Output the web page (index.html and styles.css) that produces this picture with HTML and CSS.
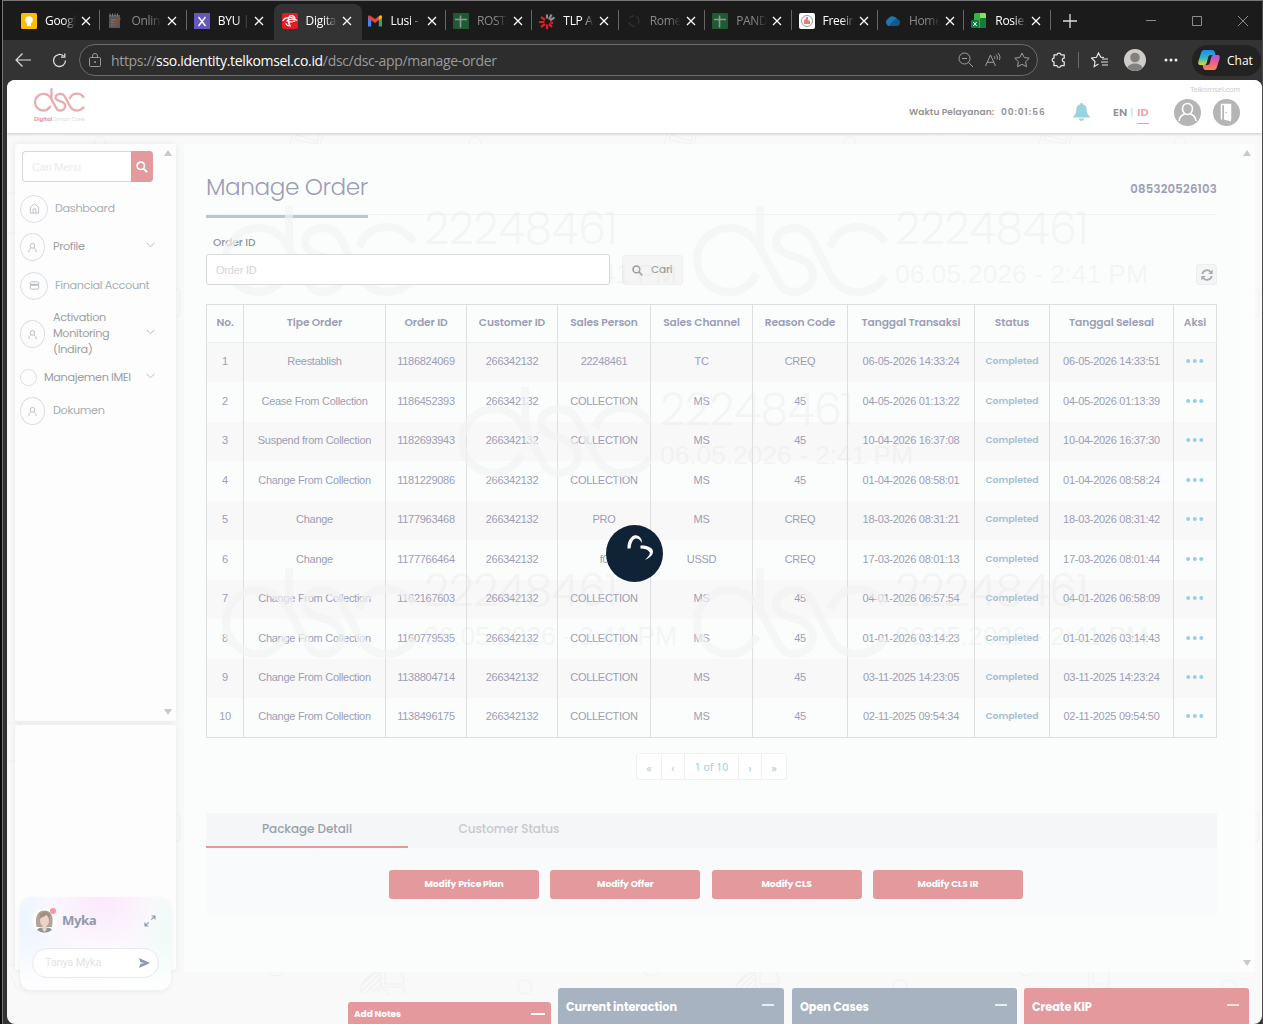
FILE: index.html
```html
<!DOCTYPE html>
<html lang="id">
<head>
    <meta charset="UTF-8">
    <meta name="viewport" content="width=device-width, initial-scale=1.0">
    <title>Digital Smart Care</title>
    <link rel="stylesheet" href="styles.css">
</head>
<body>
    <!-- icons -->
    <svg class="sprite" width="0" height="0">
        <symbol id="x" viewBox="0 0 10 10"><path d="M1 1l8 8M9 1l-8 8" fill="none" stroke="currentColor" stroke-width="1.3"/></symbol>
        <symbol id="sheet" viewBox="0 0 16 16"><rect width="16" height="16" rx="1" fill="#1f5a35"/><path d="M2 6.500h12M7.500 2.500v12" stroke="#8b9a90" stroke-width="1.600"/></symbol>
        <symbol id="dsc" viewBox="0 0 196 91"><path d="M67 0V42L84 73C88 82 93 86 100 86C111 86 120 79 120 69C120 60 113 54 102 51C91 48 83 44 83 36C83 28 91 22 101 22C109 22 115 26 119 33L135 64C141 78 151 86 164 86C176 86 186 80 192 71M192 36C186 27 176 21 165 21C152 21 142 28 137 41M64 68C57 79 48 86 36 86A32 32 0 0 1 36 22C49 22 60 29 67 42" fill="none" stroke="currentColor"/></symbol>
        <symbol id="user" viewBox="0 0 12 12"><path d="M6 1.500a2.400 2.600 0 1 1 0 5.200a2.400 2.600 0 1 1 0-5.200M2 11c0-2.500 1-4 2.600-4.500M10 11c0-2.500-1-4-2.600-4.500" fill="none" stroke="currentColor"/></symbol>
        <symbol id="down" viewBox="0 0 9 6"><path d="M.5.8l4 4 4-4" fill="none" stroke="currentColor"/></symbol>
        <symbol id="glass" viewBox="0 0 12 12"><circle cx="4.800" cy="4.800" r="3.700" fill="none" stroke="currentColor" stroke-width="1.700"/><path d="M7.700 7.700l3.500 3.500" stroke="currentColor" stroke-width="2"/></symbol>
        <symbol id="dots" viewBox="0 0 18 4"><g fill="#98d0df"><circle cx="2.200" cy="2" r="2"/><circle cx="8.800" cy="2" r="2"/><circle cx="15.300" cy="2" r="2"/></g></symbol>
        <symbol id="pie" viewBox="0 0 46 22"><path d="M1 21A22 22 0 0 1 22 0V14l8 8M26 0V12H45M45 12A24 24 0 0 0 42 0M26 15H46L43 22M3 13L15 1M2 20L21 1M7 21L22 6M13 21l9-9M18 21l4-4" fill="none" stroke="#f2f2f2" stroke-width="1.500"/></symbol>
        <symbol id="doc" viewBox="0 0 34 10"><path d="M4 0L1 10M34 0l-3 10M8 0L6 6l22 4 2-10M8 1l20 6" fill="none" stroke="#f1f1f1"/></symbol>
    </svg>

    <div class="browser">
        <div class="tabs">
            <div class="tab"><svg class="fav" viewBox="0 0 16 16"><rect width="16" height="16" rx="1.500" fill="#fbbc04"/><circle cx="8" cy="7" r="3.800" fill="#fff"/><path d="M6 10h4v3H6z" fill="#fff"/></svg><span class="tabName">Google</span><svg class="close"><use href="#x"/></svg></div>
            <div class="tab sleep"><svg class="fav" viewBox="0 0 16 16"><path d="M2 2h11v13H2z" fill="#54585a"/><path d="M3 .5v3M5.500.5v3M8 .5v3M10.500.5v3M4 7h6M4 9.500h4M4 12h5" stroke="#7a7e80"/><path d="M6 12l7-7" stroke="#8a4f2c" stroke-width="2.500"/></svg><span class="tabName">Online</span><svg class="close"><use href="#x"/></svg></div>
            <div class="tab"><svg class="fav" viewBox="0 0 16 16"><rect width="16" height="16" fill="#6259b8"/><path d="M4.500 4l7 9M11.500 4l-7 9" stroke="#fff" stroke-width="1.400"/></svg><span class="tabName">BYU | C</span><svg class="close"><use href="#x"/></svg></div>
            <div class="tab active"><svg class="fav" viewBox="0 0 16 16"><rect width="16" height="16" rx="2" fill="#e31b23"/><path d="M1 8c1-4 10-5 13-1-3-1-8-1-9 1 2 1 6 1 8 0M8 2.500C5.500 5 6 10 8.500 13.500M4 10c0 2 2 3 4 2.500M8 3c2-1 4 0 5 2" fill="none" stroke="#fff" stroke-width="1.300"/></svg><span class="tabName">Digital</span><svg class="close"><use href="#x"/></svg></div>
            <div class="tab"><svg class="fav" viewBox="0 0 16 16"><path d="M1 13.500V4l3.200 2.400v7.100z" fill="#4285f4"/><path d="M15 13.500V4l-3.200 2.400v7.100z" fill="#34a853"/><path d="M1 3.800C1 2.500 2.600 2 3.700 2.900L8 6.100V10L1 4.900z" fill="#ea4335"/><path d="M15 3.800c0-1.300-1.600-1.800-2.700-.9L8 6.100V10l7-5.100z" fill="#ea4335"/><path d="M15 3.800c0-1.300-1.600-1.800-2.700-.9l-.5.400v4L15 4.900z" fill="#fbbc04"/></svg><span class="tabName">Lusi - M</span><svg class="close"><use href="#x"/></svg></div>
            <div class="tab sleep"><svg class="fav"><use href="#sheet"/></svg><span class="tabName">ROSTE</span><svg class="close"><use href="#x"/></svg></div>
            <div class="tab"><svg class="fav" viewBox="0 0 16 16"><g fill="none" stroke-width="2.200"><path d="M6 7L2 4M5.500 9H0M6 11l-4 3M8 11.500V16M10 11l3 3M11 9.500l3 .5" stroke="#e31b23"/><path d="M8 5.500V1.500M10 6.500l2.500-5M11 7.500l4.500-3" stroke="#8c8c8c"/></g></svg><span class="tabName">TLP Ap</span><svg class="close"><use href="#x"/></svg></div>
            <div class="tab sleep"><svg class="fav" viewBox="0 0 16 16"><path d="M3.500 5A5 5 0 0 1 8 3M10 3.500a5 5 0 0 1 2 7.500M9 13a5 5 0 0 1-6-4" fill="none" stroke="#303030" stroke-width="1.500"/></svg><span class="tabName">Romeo</span><svg class="close"><use href="#x"/></svg></div>
            <div class="tab sleep"><svg class="fav"><use href="#sheet"/></svg><span class="tabName">PANDU</span><svg class="close"><use href="#x"/></svg></div>
            <div class="tab"><svg class="fav" viewBox="0 0 16 16"><rect width="16" height="16" rx="2" fill="#fff"/><circle cx="8" cy="8" r="5.500" fill="none" stroke="#999"/><path d="M5 10V7l2-1V4h2v3l2 1v3H5z" fill="#ea7d74"/></svg><span class="tabName">Freein</span><svg class="close"><use href="#x"/></svg></div>
            <div class="tab sleep"><svg class="fav" viewBox="0 0 16 16"><path d="M4 13a4 4 0 0 1-.5-7.500A5 5 0 0 1 12 6a3.600 3.600 0 0 1 .5 7z" fill="#14568f"/><path d="M3.500 5.500A5 5 0 0 1 12 6c-3 0-5 3-8 7A4 4 0 0 1 3.500 5.500z" fill="#1c78b5"/></svg><span class="tabName">Home</span><svg class="close"><use href="#x"/></svg></div>
            <div class="tab"><svg class="fav" viewBox="0 0 16 16"><rect x="3" y="0" width="12" height="15" rx="1.500" fill="#36b14a"/><path d="M3 5h6V0h4.500A1.500 1.500 0 0 1 15 1.500V5z" fill="#8fe04d"/><path d="M9 5h6v10H9z" fill="#187a3a"/><rect y="7" width="8" height="8" rx="1" fill="#107c41"/><path d="M2.300 9l3.400 4M5.700 9l-3.400 4" stroke="#fff"/></svg><span class="tabName">Rosie.x</span><svg class="close"><use href="#x"/></svg></div>
            <svg class="plus" viewBox="0 0 14 14"><path d="M7 0v14M0 7h14" stroke="#ddd" stroke-width="1.300"/></svg>
            <div class="winButtons">
                <svg viewBox="0 0 10 10"><path d="M0 4.500h10" stroke="#8c8c8c"/></svg>
                <svg viewBox="0 0 10 10"><path d="M.5.500h9v9h-9z" fill="none" stroke="#8c8c8c"/></svg>
                <svg viewBox="0 0 10 10"><path d="M0 0l10 10M10 0L0 10" stroke="#8c8c8c"/></svg>
            </div>
        </div>

        <div class="toolbar">
            <svg class="back" viewBox="0 0 16 14"><path d="M16 7H1M7.500.5L1 7l6.500 6.500" fill="none" stroke="#ddd" stroke-width="1.200"/></svg>
            <svg class="reload" viewBox="0 0 15 15"><path d="M13.500 7.500a6 6 0 1 1-2-4.500M12.800.5v3.700H9" fill="none" stroke="#ddd" stroke-width="1.300"/></svg>
            <div class="address">
                <svg class="lock" viewBox="0 0 12 14"><path d="M.5 5.500a1 1 0 0 1 1-1h9a1 1 0 0 1 1 1v7a1 1 0 0 1-1 1h-9a1 1 0 0 1-1-1zM3.500 4.500V3a2.500 2.500 0 0 1 5 0v1.500" fill="none" stroke="#9a9a9a"/><circle cx="6" cy="9" r="1" fill="#9a9a9a"/></svg>
                <span class="url">https://<b>sso.identity.telkomsel.co.id</b>/dsc/dsc-app/manage-order</span>
                <svg class="zoomOut" viewBox="0 0 16 16"><path d="M6.500 1a5.500 5.500 0 1 1 0 11a5.500 5.500 0 1 1 0-11M4 6.500h5M10.500 10.500l4.500 4.500" fill="none" stroke="#a0a0a0"/></svg>
                <svg class="read" viewBox="0 0 16 16"><path d="M.5 14L5.500 3l5 11M2.300 10.300h6.400M9 4c1 1 1 2 .5 3M11 2.500c1.500 1.500 1.700 3.300 1 5M13 1c2 2 2.500 5 1.300 7" fill="none" stroke="#a0a0a0"/></svg>
                <svg class="star" viewBox="0 0 16 16"><path d="M8 1l2.200 4.500 5 .7-3.600 3.500.9 5L8 12.300 3.500 14.700l.9-5L.8 6.200l5-.7z" fill="none" stroke="#a0a0a0"/></svg>
            </div>
            <svg class="ext" viewBox="0 0 16 16"><path d="M3 2.800h3c.2-2.200 3.800-2.200 4 0h3.200v3.400c-2.600.2-2.600 3.600 0 3.800v3.700H10c-.2 2.100-3.800 2.100-4 0H3V10C.6 9.800.6 6.400 3 6.200z" fill="none" stroke="#e4e4e4" stroke-width="1.300" stroke-linejoin="round"/></svg>
            <i class="bar"></i>
            <svg class="favs" viewBox="0 0 18 16"><path d="M13 5.500l-3.200-.3L7.500 1 5.500 5.300l-5 .8L4 9.500l-.8 5L7.500 12M11 7h6M10 10h7M11 13h6" fill="none" stroke="#e4e4e4" stroke-width="1.200"/></svg>
            <svg class="avatar" viewBox="0 0 22 22"><circle cx="11" cy="11" r="11" fill="#cfcdca"/><circle cx="11" cy="8.500" r="4.800" fill="#83807d"/><path d="M3.500 19c1-6 14-6 15 0a11 11 0 0 1-15 0z" fill="#83807d"/></svg>
            <svg class="more" viewBox="0 0 14 4"><g fill="#eee"><circle cx="2" cy="2" r="1.500"/><circle cx="7" cy="2" r="1.500"/><circle cx="12" cy="2" r="1.500"/></g></svg>
            <div class="chat">
                <svg viewBox="0 0 22 20">
                    <defs>
                        <linearGradient id="cl" x1="0" y1="0" x2="0" y2="1"><stop offset="0" stop-color="#1f8af0"/><stop offset=".5" stop-color="#2bb6c9"/><stop offset="1" stop-color="#e0d53d"/></linearGradient>
                        <linearGradient id="cr" x1="0" y1="0" x2="0" y2="1"><stop offset="0" stop-color="#a05be8"/><stop offset=".5" stop-color="#ee5a8f"/><stop offset="1" stop-color="#ff8a4a"/></linearGradient>
                    </defs>
                    <path d="M6 0h8c2 0 2.500 1 3 3l.5 2H13c-2 0-2.500 1-3 3l-1 4c-.7 2.500-1.500 3-3 3H2.500C0 15 0 13 .5 11L3 3C3.500 1 4.500 0 6 0z" fill="url(#cl)"/>
                    <path d="M16 20H8c-2 0-2.500-1-3-3l-.4-2H9c2 0 2.500-1 3-3l1-4c.7-2.500 1.500-3 3-3h3.500C22 5 22 7 21.500 9L19 17c-.5 2-1.500 3-3 3z" fill="url(#cr)"/>
                </svg>
                <span>Chat</span>
            </div>
        </div>

        <div class="page">
            <div class="header">
                <div class="logo">
                    <svg><use href="#dsc"/></svg>
                    <p><b>Digital</b> Smart Care</p>
                </div>
                <span class="site">Telkomsel.com</span>
                <span class="serve">Waktu Pelayanan:</span>
                <span class="clock">00:01:56</span>
                <svg class="bell" viewBox="0 0 17 18"><path d="M8.500 0c1 0 1.300.6 1.300 1.300C12.500 2 13.700 4 13.700 7c0 3 1 4.500 3 6.500v1H.3v-1c2-2 3-3.500 3-6.500 0-3 1.200-5 3.900-5.700C7.200.6 7.500 0 8.500 0zM6 15.500h5c0 1.500-1 2.500-2.500 2.500S6 17 6 15.500z" fill="#9bd2e0"/></svg>
                <span class="lang">EN<i>|</i><b>ID</b></span>
                <svg class="round" viewBox="0 0 27 27"><circle cx="13.500" cy="13.500" r="13.500" fill="#b5b5b5"/><path d="M13.500 4.500c3 0 5 2.500 5 5.300s-2 5.700-5 5.700-5-2.900-5-5.700 2-5.300 5-5.300zM5 22c.5-4 2.500-6 5.500-7M22 22c-.5-4-2.500-6-5.500-7" fill="none" stroke="#fff" stroke-width="1.600"/></svg>
                <svg class="round" viewBox="0 0 27 27"><circle cx="13.500" cy="13.500" r="13.500" fill="#b5b5b5"/><path d="M8.500 20.500v-15h9v15" fill="none" stroke="#fff" stroke-width="1.500"/><path d="M11 5.500l7-.5v17.500l-7-2z" fill="#fff"/><circle cx="13" cy="13.500" r=".8" fill="#b5b5b5"/></svg>
            </div>

            <svg class="doodle" viewBox="0 0 1255 891">
                <g fill="none" stroke="#f1f1f1"><circle cx="93" cy="10" r="6"/><circle cx="468" cy="10" r="6"/><circle cx="843" cy="10" r="6"/><circle cx="1173" cy="10" r="6"/><circle cx="269" cy="835" r="8"/><circle cx="518" cy="854" r="7"/><circle cx="644" cy="835" r="8"/><circle cx="893" cy="854" r="7"/><circle cx="1019" cy="835" r="8"/><circle cx="1222" cy="854" r="7"/><rect x="160" y="156" width="13" height="27" rx="2"/><rect x="160" y="681" width="13" height="27" rx="2"/><rect x="1240" y="156" width="12" height="27" rx="2"/><rect x="1240" y="681" width="12" height="27" rx="2"/><path d="M0 60h14v40H0M0 590h14v38H0M1 832h12v25l8 1M3 840l8 18"/></g>
                <use href="#doc" x="282" y="1" width="34" height="10"/><use href="#doc" x="656" y="1" width="34" height="10"/><use href="#doc" x="1031" y="1" width="34" height="10"/>
                <use href="#pie" x="352" y="839" width="46" height="22"/><use href="#pie" x="727" y="839" width="46" height="22"/><path d="M1082 839v20h20v-20M1086 839v12h16" fill="none" stroke="#f1f1f1"/>
            </svg>

            <div class="layout">
                <div class="side">
                    <div class="menu">
                        <div class="items">
                            <div class="searchMenu"><span>Cari Menu</span><button><svg><use href="#glass"/></svg></button></div>
                            <div class="item"><i class="circle big"><svg viewBox="0 0 12 12"><path d="M1.500 11V4.500L6 1l4.500 3.500V11zM4.500 11V6.500h3V11" fill="none" stroke="currentColor" stroke-width=".9"/></svg></i><span>Dashboard</span></div>
                            <div class="item dark"><i class="circle"><svg><use href="#user"/></svg></i><span>Profile</span><svg class="down"><use href="#down"/></svg></div>
                            <div class="item"><i class="circle big"><svg viewBox="0 0 12 12"><rect x="1.500" y="2" width="9" height="8" rx="1" fill="none" stroke="currentColor"/><path d="M2 5.200h8" stroke="currentColor" stroke-width="2"/></svg></i><span>Financial Account</span></div>
                            <div class="item dark tall"><i class="circle"><svg><use href="#user"/></svg></i><span>Activation<br>Monitoring<br>(Indira)</span><svg class="down"><use href="#down"/></svg></div>
                            <div class="item dark low"><i class="circle small"></i><span>Manajemen IMEI</span><svg class="down"><use href="#down"/></svg></div>
                            <div class="item"><i class="circle"><svg><use href="#user"/></svg></i><span>Dokumen</span></div>
                        </div>
                        <div class="scroll"><i class="arrowUp"></i><i class="arrowDown"></i></div>
                    </div>
                    <div class="box"></div>
                    <div class="myka">
                        <div class="mykaTop">
                            <svg class="face" viewBox="0 0 25 25"><circle cx="12.500" cy="13" r="12" fill="#fff"/><path d="M4.500 19C2.500 8 6 2.500 12.500 2.500S22 8 20 19z" fill="#b3a297"/><path d="M5 22c2-3 5-2 7.500-2s5.500-1 7.500 2a12 12 0 0 1-15 0z" fill="#8f9398"/><ellipse cx="12.500" cy="12.500" rx="4.500" ry="6" fill="#ecd3c8"/><path d="M10.500 18h4v4l-2 2-2-2z" fill="#ecd3c8"/><path d="M7.500 12c1-4 6-2 7-6 1 3 3 3 3 6l1-6-5-3-6 3z" fill="#a39083"/><circle cx="21" cy="3" r="3" fill="#ff94a0"/></svg>
                            <b>Myka</b>
                            <svg class="expand" viewBox="0 0 12 12"><path d="M7.500 1H11v3.500M11 1L7.300 4.700M4.500 11H1V7.500M1 11l3.700-3.700" fill="none" stroke="#8e9aae" stroke-width="1.200"/></svg>
                        </div>
                        <div class="ask"><span>Tanya Myka</span><svg viewBox="0 0 11 10"><path d="M0 0l11 5L0 10l1.500-4.200L6 5 1.500 4.200z" fill="#8b97ae"/></svg></div>
                    </div>
                </div>

                <div class="main">
                    <div class="content">
                        <div class="titleRow"><h1>Manage Order</h1><span>085320526103</span></div>
                        <label class="label">Order ID</label>
                        <div class="findRow">
                            <div class="orderInput">Order ID</div>
                            <button class="find"><svg><use href="#glass"/></svg>Cari</button>
                            <button class="refresh"><svg viewBox="0 0 12 12"><path d="M1.300 5A4.800 4.800 0 0 1 9.800 3M10.700 7A4.800 4.800 0 0 1 2.200 9" fill="none" stroke="currentColor" stroke-width="1.800"/><path d="M11.700.5V5H7.200zM.3 11.500V7h4.500z" fill="currentColor"/></svg></button>
                        </div>
                        <table class="orders">
                            <colgroup><col class="c1"><col class="c2"><col class="c3"><col class="c4"><col class="c5"><col class="c6"><col class="c7"><col class="c8"><col class="c9"><col class="c10"><col class="c11"></colgroup>
                            <thead>
                                <tr><th>No.</th><th>Tipe Order</th><th>Order ID</th><th>Customer ID</th><th>Sales Person</th><th>Sales Channel</th><th>Reason Code</th><th>Tanggal Transaksi</th><th>Status</th><th>Tanggal Selesai</th><th>Aksi</th></tr>
                            </thead>
                            <tbody>
                                <tr><td>1</td><td>Reestablish</td><td>1186824069</td><td>266342132</td><td>22248461</td><td>TC</td><td>CREQ</td><td>06-05-2026 14:33:24</td><td class="done">Completed</td><td>06-05-2026 14:33:51</td><td><svg><use href="#dots"/></svg></td></tr>
                                <tr><td>2</td><td>Cease From Collection</td><td>1186452393</td><td>266342132</td><td>COLLECTION</td><td>MS</td><td>45</td><td>04-05-2026 01:13:22</td><td class="done">Completed</td><td>04-05-2026 01:13:39</td><td><svg><use href="#dots"/></svg></td></tr>
                                <tr><td>3</td><td>Suspend from Collection</td><td>1182693943</td><td>266342132</td><td>COLLECTION</td><td>MS</td><td>45</td><td>10-04-2026 16:37:08</td><td class="done">Completed</td><td>10-04-2026 16:37:30</td><td><svg><use href="#dots"/></svg></td></tr>
                                <tr><td>4</td><td>Change From Collection</td><td>1181229086</td><td>266342132</td><td>COLLECTION</td><td>MS</td><td>45</td><td>01-04-2026 08:58:01</td><td class="done">Completed</td><td>01-04-2026 08:58:24</td><td><svg><use href="#dots"/></svg></td></tr>
                                <tr><td>5</td><td>Change</td><td>1177963468</td><td>266342132</td><td>PRO</td><td>MS</td><td>CREQ</td><td>18-03-2026 08:31:21</td><td class="done">Completed</td><td>18-03-2026 08:31:42</td><td><svg><use href="#dots"/></svg></td></tr>
                                <tr><td>6</td><td>Change</td><td>1177766464</td><td>266342132</td><td>f0</td><td>USSD</td><td>CREQ</td><td>17-03-2026 08:01:13</td><td class="done">Completed</td><td>17-03-2026 08:01:44</td><td><svg><use href="#dots"/></svg></td></tr>
                                <tr><td>7</td><td>Change From Collection</td><td>1162167603</td><td>266342132</td><td>COLLECTION</td><td>MS</td><td>45</td><td>04-01-2026 06:57:54</td><td class="done">Completed</td><td>04-01-2026 06:58:09</td><td><svg><use href="#dots"/></svg></td></tr>
                                <tr><td>8</td><td>Change From Collection</td><td>1160779535</td><td>266342132</td><td>COLLECTION</td><td>MS</td><td>45</td><td>01-01-2026 03:14:23</td><td class="done">Completed</td><td>01-01-2026 03:14:43</td><td><svg><use href="#dots"/></svg></td></tr>
                                <tr><td>9</td><td>Change From Collection</td><td>1138804714</td><td>266342132</td><td>COLLECTION</td><td>MS</td><td>45</td><td>03-11-2025 14:23:05</td><td class="done">Completed</td><td>03-11-2025 14:23:24</td><td><svg><use href="#dots"/></svg></td></tr>
                                <tr><td>10</td><td>Change From Collection</td><td>1138496175</td><td>266342132</td><td>COLLECTION</td><td>MS</td><td>45</td><td>02-11-2025 09:54:34</td><td class="done">Completed</td><td>02-11-2025 09:54:50</td><td><svg><use href="#dots"/></svg></td></tr>
                            </tbody>
                        </table>
                        <div class="pager"><span class="off">«</span><span class="off">‹</span><span class="now">1 of 10</span><span>›</span><span>»</span></div>
                        <div class="detail">
                            <div class="detailTabs"><span class="sel">Package Detail</span><span>Customer Status</span></div>
                            <div class="actions"><button>Modify Price Plan</button><button>Modify Offer</button><button>Modify CLS</button><button>Modify CLS IR</button></div>
                        </div>
                    </div>
                    <div class="scroll"><i class="arrowUp"></i><i class="arrowDown"></i></div>
                    <!-- watermark over the content -->
                    <div class="mark m1"><svg><use href="#dsc"/></svg><p>22248461</p><small>06.05.2026 - 2:41 PM</small></div>
                    <div class="mark m2"><svg><use href="#dsc"/></svg><p>22248461</p><small>06.05.2026 - 2:41 PM</small></div>
                    <div class="mark m3"><svg><use href="#dsc"/></svg><p>22248461</p><small>06.05.2026 - 2:41 PM</small></div>
                    <div class="mark m4"><svg><use href="#dsc"/></svg><p>22248461</p><small>06.05.2026 - 2:41 PM</small></div>
                    <div class="mark m5"><svg><use href="#dsc"/></svg><p>22248461</p><small>06.05.2026 - 2:41 PM</small></div>
                </div>
            </div>

            <div class="dock">
                <div class="card notes"><span>Add Notes</span><i></i></div>
                <div class="card blue wide"><span>Current interaction</span><i></i></div>
                <div class="card blue"><span>Open Cases</span><i></i></div>
                <div class="card"><span>Create KIP</span><i></i></div>
            </div>

            <svg class="loader" viewBox="0 0 57 57"><circle cx="28.500" cy="28.500" r="28.500" fill="#102235"/><path d="M21.500 23.500C21 16 26 9 31 10.500c3.500 1 5 4 5 7.500-2-4-4.500-5-6.500-4.500-3 1-4 4-5 10z" fill="#fff"/><path d="M34.500 20.500c6-.5 12.500 2 12.500 6 0 4-4 6.500-8 8.500 4-4 5.500-6 4.500-8-1.500-2.500-5-3.500-9-3.500z" fill="#fff"/></svg>
        </div>
    </div>
</body>
</html>
```

FILE: styles.css
```css
*{
    box-sizing: border-box;
}
body{
    margin: 0;
    width: 1263px;
    height: 1024px;
    overflow: hidden;
    background: #0c0c0c;
    font-family: Poppins, Inter, "Noto Sans", sans-serif;
    color: #9d9db6;
}
p,h1{
    margin: 0;
}
button{
    font-family: inherit;
    border: 0;
    padding: 0;
}
svg{
    display: block;
    flex: none;
}
.sprite{
    position: absolute;
}
/* browser frame */
.browser{
    height: 1024px;
    margin-left: 2px;
    display: flex;
    flex-direction: column;
    background: #333;
    border-top: 1px solid #777;
    border-left: 1px solid #777;
    border-right: 1px solid #4b4b4b;
}
.tabs{
    height: 39px;
    flex: none;
    padding-left: 10px;
    display: flex;
    align-items: center;
    background: #1b1b1b;
    font: 12px "Open Sans", sans-serif;
    letter-spacing: -0.3px;
    color: #fff;
}
.tab{
    width: 86.4px;
    height: 39px;
    padding-left: 8px;
    flex: none;
    display: flex;
    align-items: center;
    position: relative;
}
.tab::after{
    content: "";
    position: absolute;
    right: -1px;
    top: 9px;
    height: 20px;
    width: 1px;
    background: #666;
}
.active::after,.tab:nth-child(3)::after{
    display: none;
}
.fav{
    width: 16px;
    height: 16px;
}
.tabName{
    width: 31px;
    margin: 0 5px 0 8px;
    overflow: hidden;
    white-space: nowrap;
    -webkit-mask-image: linear-gradient(90deg, #000 60%, transparent);
    mask-image: linear-gradient(90deg, #000 60%, transparent);
}
.close{
    width: 10px;
    height: 10px;
}
.sleep .tabName{
    color: #8a8a8a;
}
.active{
    width: 88px;
    height: 36px;
    margin: 3px -3px 0 1.4px;
    padding-bottom: 3px;
    background: #333;
    border-radius: 8px 8px 0 0;
}
.plus{
    width: 14px;
    height: 14px;
    margin-left: 13px;
}
.winButtons{
    margin-left: auto;
    margin-right: 14px;
    display: flex;
    gap: 36px;
}
.winButtons svg{
    width: 10px;
    height: 10px;
}
.toolbar{
    height: 40px;
    flex: none;
    display: flex;
    align-items: center;
    padding-left: 12px;
}
.back{
    width: 16px;
    height: 14px;
}
.reload{
    width: 15px;
    height: 15px;
    margin: 0 13px 0 21px;
}
.address{
    width: 959px;
    height: 32px;
    margin-left: -1px;
    padding: 0 7px 0 9px;
    display: flex;
    align-items: center;
    border: 1px solid #6b6b6b;
    border-radius: 16px;
    background: #2d2d2d;
}
.lock{
    width: 12px;
    height: 14px;
}
.url{
    flex: 1;
    margin-left: 10px;
    font: 14px "Open Sans", sans-serif;
    letter-spacing: -0.33px;
    color: #9b9b9b;
}
.url b{
    font-weight: normal;
    color: #fff;
}
.zoomOut,.read,.star{
    width: 16px;
    height: 16px;
}
.zoomOut{
    margin-right: -2px;
}
.read,.star{
    margin-left: 13px;
}
.ext{
    width: 16px;
    height: 16px;
    margin-left: 13px;
}
.bar{
    width: 1px;
    height: 16px;
    margin: 0 12px 0 11px;
    background: #6b6b6b;
}
.favs{
    width: 18px;
    height: 16px;
}
.avatar{
    width: 22px;
    height: 22px;
    margin: 0 18px 0 15px;
}
.more{
    width: 14px;
    height: 4px;
}
.chat{
    width: 69px;
    height: 31px;
    margin-left: 14px;
    padding-left: 6px;
    display: flex;
    align-items: center;
    gap: 7px;
    border-radius: 16px;
    background: #222;
    color: #fff;
    font: 12px "Open Sans", sans-serif;
}
.chat svg{
    width: 22px;
    height: 20px;
}
/* page */
.page{
    flex: 1;
    margin-left: 4px;
    display: flex;
    flex-direction: column;
    position: relative;
    overflow: hidden;
    border-radius: 8px;
    background: #f9f9f9;
}
.header{
    height: 53px;
    flex: none;
    padding: 11px 22px 0 27px;
    display: flex;
    align-items: center;
    position: relative;
    z-index: 1;
    background: #fff;
    box-shadow: 0 1px 3px rgba(0,0,0,.2);
}
.logo{
    margin: -14px auto 0 0;
    color: #ebacb1;
}
.logo svg{
    width: 51px;
    height: 24px;
    stroke-width: 9;
}
.logo p{
    margin-top: 3px;
    font-size: 5.6px;
    line-height: 8px;
    letter-spacing: -0.1px;
    color: #ddd;
}
.logo b{
    color: #e9a4aa;
}
.site{
    position: absolute;
    top: 5px;
    right: 22px;
    font: 8px/10px "Liberation Sans", sans-serif;
    letter-spacing: -0.2px;
    color: #c9ced6;
}
.serve,.clock{
    font-size: 9px;
    font-weight: 600;
    color: #929292;
    white-space: nowrap;
}
.serve{
    width: 86px;
    letter-spacing: 0.1px;
}
.clock{
    width: 45px;
    margin-left: 6px;
    letter-spacing: 0.95px;
}
.bell{
    width: 17px;
    height: 18px;
    margin-left: 27px;
}
.lang{
    width: 61px;
    margin-left: 23px;
    font-size: 11.3px;
    font-weight: 600;
    color: #929292;
    white-space: nowrap;
}
.lang i{
    margin: 0 4px 0 3px;
    font-style: normal;
    font-weight: 300;
    color: #ccc;
}
.lang b{
    padding-bottom: 3px;
    font-weight: 600;
    color: #f29aa2;
    border-bottom: 1px solid #f29aa2;
}
.round{
    width: 27px;
    height: 27px;
}
.round + .round{
    margin-left: 12px;
}
.doodle{
    position: absolute;
    top: 53px;
    left: 0;
    width: 1255px;
    height: 891px;
}
.layout{
    height: 839px;
    flex: none;
    padding: 11px 7px 0 8px;
    display: flex;
    gap: 8px;
    position: relative;
}
.side{
    width: 161px;
    flex: none;
    display: flex;
    flex-direction: column;
    gap: 4px;
    position: relative;
}
.menu{
    height: 577px;
    display: flex;
    background: #fdfdfd;
    border-radius: 3px;
    box-shadow: 0 0 6px rgba(0,0,0,.08);
}
.box{
    height: 245px;
    background: #fdfdfd;
    border-radius: 3px;
    box-shadow: 0 0 6px rgba(0,0,0,.08);
}
.items{
    width: 146px;
    padding: 7px 6px 7px 5px;
}
.scroll{
    width: 15px;
    flex: none;
    padding: 6px 0;
    display: flex;
    flex-direction: column;
    align-items: center;
    justify-content: space-between;
    background: #fdfdfd;
}
.arrowUp,.arrowDown{
    margin-right: 1px;
    border: 4.5px solid transparent;
    border-bottom: 6px solid #c9c9c9;
    border-top: 0;
}
.arrowDown{
    border-top: 6px solid #c9c9c9;
    border-bottom: 0;
}
.searchMenu{
    width: 131px;
    height: 31px;
    margin: 0 0 12.5px 2px;
    padding-left: 9px;
    display: flex;
    align-items: center;
    justify-content: space-between;
    border: 1px solid #d3d8dc;
    border-right: 0;
    border-radius: 4px;
    background: #fff;
    font: 11px "Liberation Sans", sans-serif;
    letter-spacing: -0.2px;
    color: #ebebeb;
}
.searchMenu button{
    width: 22px;
    height: 31px;
    padding-left: 5px;
    border-radius: 0 4px 4px 0;
    background: #e4999d;
    color: #fff;
}
.searchMenu button svg{
    width: 12px;
    height: 12px;
}
.item{
    height: 28px;
    margin-bottom: 10.5px;
    display: flex;
    align-items: center;
    font-size: 11.3px;
    line-height: 16px;
    letter-spacing: -0.38px;
    white-space: nowrap;
    color: #a8aeb6;
}
.item span{
    margin-top: -2px;
}
.dark{
    color: #9c9ea2;
}
.tall{
    height: 48px;
    margin-bottom: 11px;
}
.low{
    height: 17px;
    margin-bottom: 11px;
}
.circle{
    width: 25px;
    height: 28px;
    margin-right: 8px;
    flex: none;
    display: flex;
    align-items: center;
    justify-content: center;
    border: 1px solid #dcdfe2;
    border-radius: 50%;
    color: #b4bac1;
}
.circle svg{
    width: 11px;
    height: 11px;
}
.big{
    width: 28px;
    margin-right: 7px;
}
.small{
    width: 17px;
    height: 17px;
    margin-right: 7px;
}
.down{
    width: 9px;
    height: 6px;
    margin: 0 0 4px auto;
    color: #bbb;
}
.myka{
    position: absolute;
    left: 5px;
    top: 753px;
    width: 151px;
    height: 93px;
    padding: 11px 12px;
    border-radius: 12px;
    background: radial-gradient(circle at 55% 0, #fbe8fc 0, rgba(255,246,253,.6) 40%, transparent 65%), linear-gradient(180deg, transparent 40%, #fff), linear-gradient(90deg, #eff5ff, #f9f9ff 55%, #edfbf6);
    box-shadow: 0 2px 6px rgba(0,0,0,.05);
}
.mykaTop{
    display: flex;
    align-items: center;
    font: 13.2px/25px "Noto Sans", sans-serif;
    letter-spacing: -0.5px;
    color: #8e9aae;
}
.mykaTop b{
    margin-left: 5px;
}
.face{
    width: 25px;
    height: 25px;
}
.expand{
    width: 12px;
    height: 12px;
    margin: 1px 3px 0 auto;
}
.ask{
    width: 127px;
    height: 30px;
    margin-top: 15px;
    padding: 0 8px 0 12px;
    display: flex;
    align-items: center;
    justify-content: space-between;
    border: 1px solid #e8e9ee;
    border-radius: 15px;
    background: #fff;
    font: 11px/26px Roboto, sans-serif;
    letter-spacing: -0.2px;
    color: #e2e4e7;
}
.ask svg{
    width: 11px;
    height: 10px;
}
.main{
    flex: 1;
    display: flex;
    position: relative;
    overflow: hidden;
    background: #fbfdfc;
}
.content{
    flex: 1;
    padding: 0 23px 0 22px;
}
.titleRow{
    height: 71px;
    padding-top: 17px;
    display: flex;
    justify-content: space-between;
    border-bottom: 1px solid #f1f3f3;
}
.titleRow h1{
    width: 162px;
    height: 57px;
    font-size: 23.2px;
    font-weight: 300;
    line-height: 52px;
    letter-spacing: -0.45px;
    white-space: nowrap;
    border-bottom: 3px solid #b3c8d8;
}
.titleRow span{
    font-size: 11.7px;
    font-weight: 600;
    line-height: 56px;
    letter-spacing: 0.2px;
}
.label{
    display: block;
    margin: 20px 0 4px 7px;
    font-size: 10.6px;
    font-weight: 500;
    line-height: 15px;
    letter-spacing: -0.1px;
    color: #8f959c;
}
.findRow{
    display: flex;
    align-items: flex-end;
}
.orderInput{
    width: 404px;
    height: 31px;
    padding-left: 9px;
    position: relative;
    z-index: 2;
    border: 1px solid #d6d9da;
    border-radius: 3px;
    background: #fff;
    font: 11px/31px "Liberation Sans", sans-serif;
    letter-spacing: -0.2px;
    color: #d5d5d5;
}
.find{
    width: 61px;
    height: 30px;
    margin-left: 12px;
    padding-left: 9px;
    display: flex;
    align-items: center;
    gap: 8px;
    border: 1px solid #efefef;
    border-radius: 3px;
    background: #f5f5f5;
    font-size: 10.6px;
    font-weight: 500;
    letter-spacing: -0.2px;
    color: #9a9a9a;
}
.find svg{
    width: 11px;
    height: 11px;
}
.refresh{
    width: 21px;
    height: 21px;
    margin-left: auto;
    display: flex;
    align-items: center;
    justify-content: center;
    border: 1px solid #ededed;
    border-radius: 3px;
    background: #f5f5f5;
    color: #a6adb2;
}
.refresh svg{
    width: 12px;
    height: 12px;
}
.orders{
    width: 1011px;
    height: 434px;
    margin-top: 19px;
    table-layout: fixed;
    border-collapse: collapse;
    border: 1px solid #dcdedf;
}
.c1{width: 37px;}
.c2{width: 142px;}
.c3{width: 81px;}
.c4{width: 91px;}
.c5{width: 93px;}
.c6{width: 102px;}
.c7{width: 95px;}
.c8{width: 127px;}
.c9{width: 75px;}
.c10{width: 124px;}
.c11{width: 43px;}
.orders th,.orders td{
    padding: 0;
    text-align: center;
    white-space: nowrap;
    border-left: 1px solid #dcdedf;
}
.orders th{
    height: 38px;
    padding-bottom: 2px;
    font-size: 10.7px;
    font-weight: 600;
    letter-spacing: -0.1px;
    border-bottom: 1px solid #eceeee;
}
.orders td{
    height: 39.5px;
    padding-bottom: 2.5px;
    font: 11px "Liberation Sans", sans-serif;
    letter-spacing: -0.28px;
}
.orders tbody tr:nth-child(odd){
    background: #f8f8f8;
}
.orders .done{
    font: 600 9.3px Poppins, Inter, sans-serif;
    letter-spacing: 0;
    color: #a5bfd2;
}
.orders td svg{
    width: 18px;
    height: 4px;
    margin: 0 auto;
}
.pager{
    width: 151px;
    height: 27px;
    margin: 15px 0 33px 430px;
    display: flex;
    border: 1px solid #eef0f1;
    border-radius: 3px;
    background: #fff;
    font: 11px/27px "Noto Sans", sans-serif;
    color: #a9cbe0;
}
.pager span{
    width: 23px;
    text-align: center;
    border-left: 1px solid #eef0f1;
}
.pager span:first-child{
    width: 24px;
    border-left: 0;
}
.pager span:last-child{
    width: 25px;
}
.pager .now{
    width: 54px;
    font: 10.6px/26px "Noto Sans", sans-serif;
}
.pager .off{
    color: #c5cacd;
}
.detail{
    height: 102px;
    background: #f9fafc;
    border-radius: 3px;
}
.detailTabs{
    height: 35px;
    display: flex;
    background: #f5f6f8;
    font-size: 12px;
    font-weight: 500;
    line-height: 32px;
    letter-spacing: -0.05px;
    text-align: center;
    color: #c6c9ce;
}
.detailTabs span{
    width: 202px;
}
.detailTabs .sel{
    color: #9ba1a8;
    border-bottom: 2px solid #e4999d;
}
.actions{
    padding: 22px 11px 0 0;
    display: flex;
    justify-content: center;
    gap: 11.3px;
}
.actions button{
    width: 150px;
    height: 29px;
    padding-bottom: 1px;
    border-radius: 3px;
    background: #e4999d;
    color: #fff;
    font-size: 9.2px;
    font-weight: 700;
    letter-spacing: -0.1px;
}
.mark{
    position: absolute;
    width: 460px;
    height: 91px;
    color: rgba(242,242,243,.7);
    pointer-events: none;
}
.mark svg{
    width: 196px;
    height: 91px;
    stroke-width: 8;
}
.mark p{
    position: absolute;
    left: 202px;
    top: 1px;
    font-size: 44px;
    font-weight: 300;
    line-height: 44px;
    letter-spacing: -0.5px;
    color: rgba(225,225,228,.3);
}
.mark small{
    position: absolute;
    left: 202px;
    top: 52px;
    font: 26.5px/32px "Liberation Sans", sans-serif;
    letter-spacing: -0.1px;
    white-space: nowrap;
    color: rgba(225,225,228,.3);
}
.m1{left: 38px; top: 62px;}
.m2{left: 509px; top: 62px;}
.m3{left: 274px; top: 243px;}
.m4{left: 38px; top: 424px;}
.m5{left: 509px; top: 424px;}
/* bottom cards */
.dock{
    flex: 1;
    padding-right: 13px;
    display: flex;
    justify-content: flex-end;
    align-items: flex-end;
    gap: 7px;
    position: relative;
}
.card{
    width: 225px;
    height: 36px;
    padding: 0 10px 0 8px;
    display: flex;
    justify-content: space-between;
    border-radius: 3px 3px 0 0;
    background: #e4999d;
    color: #fff;
    font-size: 11.3px;
    font-weight: 700;
    line-height: 39px;
    letter-spacing: -0.05px;
}
.card i{
    width: 12px;
    height: 2px;
    margin-top: 16px;
    background: rgba(255,255,255,.75);
}
.blue{
    background: #a7b3c1;
}
.wide{
    width: 226px;
    margin-right: 1px;
}
.notes{
    width: 203px;
    height: 22px;
    padding: 0 6px;
    font-size: 9px;
    line-height: 24px;
}
.notes i{
    width: 14px;
    margin-top: 11px;
    background: #fff;
}
.loader{
    position: absolute;
    left: 599px;
    top: 445px;
    width: 57px;
    height: 57px;
}
```
